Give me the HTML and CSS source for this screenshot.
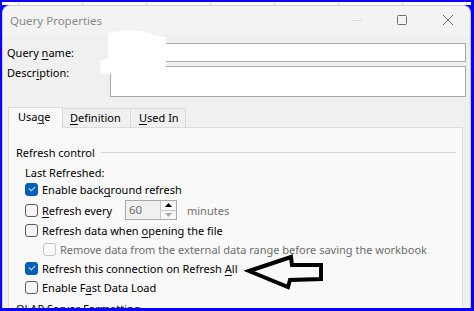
FILE: index.html
```html
<!DOCTYPE html>
<html>
<head>
<meta charset="utf-8">
<link rel="stylesheet" href="styles.css">
</head>
<body>
<div class="frame">
  <div class="sheet-strip"></div>
  <div class="dialog">
    <div class="titlebar">
      <span class="title">Query Properties</span>
      <div class="controls">
        <svg class="ctl" width="14" height="12" viewBox="0 0 14 12"><line x1="2" y1="6.5" x2="12" y2="6.5" stroke="#d8d8d8" stroke-width="1"/></svg>
        <svg class="ctl" width="14" height="12" viewBox="0 0 14 12"><rect x="2.5" y="1.5" width="9" height="9" rx="1" fill="none" stroke="#6e6e6e" stroke-width="1"/></svg>
        <svg class="ctl" width="14" height="12" viewBox="0 0 14 12"><path d="M2 1 L12 11 M12 1 L2 11" stroke="#6e6e6e" stroke-width="1"/></svg>
      </div>
    </div>
    <div class="body">
      <div class="fields">
        <div class="lbl">Query <u>n</u>ame:</div>
        <div class="input short"></div>
        <div class="lbl desc">Descr<u>i</u>ption:</div>
        <div class="input tall"></div>
      </div>
      <div class="tabs">
        <div class="tab active">Usa<u>g</u>e</div>
        <div class="tab def"><u>D</u>efinition</div>
        <div class="tab used"><u>U</u>sed In</div>
      </div>
      <div class="panel">
        <div class="group">
          <span>Refresh control</span>
          <div class="rule"></div>
        </div>
        <div class="row plain">Last Refreshed:</div>
        <div class="row"><span class="cb on"></span><span>Enable back<u>g</u>round refresh</span></div>
        <div class="row every">
          <span class="cb"></span><span class="every-lbl"><u>R</u>efresh every</span>
          <div class="spin">
            <span class="spin-val">60</span>
            <div class="spin-btns">
              <div class="sb up"><svg width="7" height="4" viewBox="0 0 7 4"><path d="M0 4 L3.5 0 L7 4 Z" fill="#000"/></svg></div>
              <div class="sb down"><svg width="7" height="4" viewBox="0 0 7 4"><path d="M0 0 L3.5 4 L7 0 Z" fill="#a8a8a8"/></svg></div>
            </div>
          </div>
          <span class="muted minutes">minutes</span>
        </div>
        <div class="row"><span class="cb"></span><span>Refresh data when <u>o</u>pening the file</span></div>
        <div class="row sub"><span class="cb dis"></span><span class="muted">Remove data from the external data range before saving the workbook</span></div>
        <div class="row"><span class="cb on"></span><span>Refresh this connection on Refresh <u>A</u>ll</span></div>
        <div class="row"><span class="cb"></span><span>Enable F<u>a</u>st Data Load</span></div>
        <div class="row plain olap">OLAP Server Formatting</div>
      </div>
    </div>
  </div>
  <svg class="blob" width="70" height="48" viewBox="98 28 70 48"><path d="M108 33 L125 30 L140 31 L155 35 L166 37 L166 66 L163 69 L112 74 L101 74 L100 61 L108 58 Z" fill="#fff"/></svg>
  <svg class="arrow" width="84" height="40" viewBox="244 252 84 40"><path d="M249 271 L291 257 L292 265 L321 265 L321 279 L290 280 L288 287 Z" fill="none" stroke="#000" stroke-width="4" stroke-linejoin="miter"/></svg>
</div>
</body>
</html>
```
FILE: styles.css
```css
* { box-sizing: border-box; }
html, body { margin: 0; padding: 0; }
body {
  background: #0a00ff;
  font-family: "Noto Sans", "Segoe UI", sans-serif;
  font-size: 11px;
  color: #000;
}
.frame {
  position: relative;
  width: 474px;
  height: 311px;
  padding: 2px 3px 3px 2px;
  display: flex;
  flex-direction: column;
  overflow: hidden;
}
.sheet-strip {
  height: 3px;
  flex: none;
  background-color: #fff;
  background-image: linear-gradient(to right, #d8d8d8 1px, transparent 1px);
  background-size: 64px 100%;
  background-position: 16px 0;
}
.dialog {
  flex: 1;
  min-height: 0;
  overflow: hidden;
  border-radius: 8px 8px 0 0;
  border: 1px solid #cfcfcf;
  border-bottom: none;
  background: #f0f0f0;
  display: flex;
  flex-direction: column;
}
.titlebar {
  height: 29px;
  flex: none;
  background: #f3f3f3;
  display: flex;
  align-items: center;
  padding-left: 7px;
}
.title { color: #8a8a8a; font-size: 11.5px; margin-top: -1px; }
.controls { margin-left: auto; display: flex; align-items: center; height: 100%; margin-top: -2px; }
.ctl { display: block; }
.controls .ctl:nth-child(1) { margin-right: 31px; }
.controls .ctl:nth-child(2) { margin-right: 32px; }
.controls .ctl:nth-child(3) { margin-right: 15px; }
.body {
  flex: 1;
  padding: 8px 4px 0 4px;
  display: flex;
  flex-direction: column;
}
.fields {
  display: grid;
  grid-template-columns: 103px 1fr;
  row-gap: 4px;
}
.lbl { line-height: 19px; }
.lbl.desc { line-height: 14px; }
.input { background: #fff; border: 1px solid #a9a9a9; }
.input.short { height: 19px; }
.input.tall { height: 31px; }
.tabs {
  display: flex;
  align-items: flex-end;
  margin: 10px 0 0 1px;
  position: relative;
  z-index: 1;
}
.tab {
  height: 19px;
  line-height: 17px;
  border: 1px solid #dadada;
  border-bottom: none;
  background: #f0f0f0;
  white-space: nowrap;
  margin-left: -1px;
}
.tab.active {
  height: 21px;
  margin-bottom: -1px;
  background: #f9f9f9;
  padding-left: 9px;
  margin-left: 0;
  line-height: 18px;
  width: 55px;
}
.tab.def { width: 69px; padding-left: 7px; }
.tab.used { width: 56px; padding-left: 8px; }
.panel {
  flex: 1;
  margin: 0 3px 0 1px;
  border: 1px solid #dcdcdc;
  border-bottom: none;
  background: #f9f9f9;
  padding: 16px 0 0 7px;
}
.group { display: flex; align-items: center; height: 16px; margin-right: 6px; }
.rule { flex: 1; height: 1px; background: #d6d6d6; margin-left: 6px; }
.row {
  display: flex;
  align-items: center;
  height: 19px;
  margin-left: 9px;
  white-space: nowrap;
}
.row.plain { height: 16px; margin-top: 4px; }
.row.every { height: 22px; }
.row.sub { margin-left: 27px; height: 19px; }
.row.olap { margin-left: 0; margin-top: 3px; }
.cb {
  width: 13px;
  height: 13px;
  border: 1px solid #5d5d5d;
  border-radius: 3px;
  background: #f6f6f6;
  margin-right: 4px;
  flex: none;
  position: relative;
}
.cb.on { background: #005fb8; border-color: #005fb8; }
.cb.on::after {
  content: "";
  position: absolute;
  left: 3px;
  top: 2px;
  width: 5px;
  height: 3px;
  border-left: 1px solid #cfe3f7;
  border-bottom: 1px solid #cfe3f7;
  transform: rotate(-45deg);
}
.cb.dis { border-color: #c4c4c4; background: #fafafa; }
.muted { color: #6d6d6d; }
.every-lbl { width: 83px; }
.spin {
  width: 52px;
  height: 20px;
  border: 1px solid #a9a9a9;
  background: #f0f0f0;
  display: flex;
}
.spin-val { flex: 1; color: #6d6d6d; padding-left: 3px; line-height: 18px; font-size: 11.5px; }
.spin-btns { width: 16px; display: flex; flex-direction: column; border-left: 1px solid #c8c8c8; }
.sb { flex: 1; display: flex; align-items: center; justify-content: center; background: #f7f7f7; }
.sb.up { border-bottom: 1px solid #c8c8c8; }
.minutes { margin-left: 10px; }
u { text-decoration-thickness: 1px; text-underline-offset: 2px; }
.blob { position: absolute; left: 98px; top: 28px; }
.arrow { position: absolute; left: 244px; top: 252px; }
```
